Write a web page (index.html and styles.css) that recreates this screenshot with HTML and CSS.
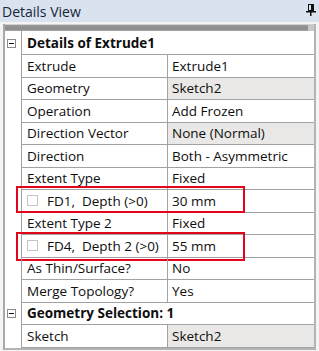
FILE: index.html
```html
<!DOCTYPE html>
<html>
<head>
<meta charset="utf-8">
<link rel="stylesheet" href="styles.css">
</head>
<body>
<div class="panel">
  <div class="titlebar">
    <span class="title">Details View</span>
    <svg class="pin" width="10" height="12" viewBox="0 0 10 12">
      <rect x="2.5" y="0.5" width="5" height="6" fill="none" stroke="#111" stroke-width="1"/>
      <rect x="5" y="1" width="2" height="5" fill="#111"/>
      <rect x="0" y="7" width="10" height="1.5" fill="#111"/>
      <rect x="4" y="8" width="1.5" height="4" fill="#111"/>
    </svg>
  </div>
  <div class="frame">
    <div class="colhdr"><span class="corner"></span></div>
    <div class="grid">
      <div class="row group first">
        <div class="gutter"><span class="toggle"></span></div>
        <div class="gcell">Details of Extrude1</div>
      </div>
      <div class="row"><div class="gutter"></div><div class="name">Extrude</div><div class="value">Extrude1</div></div>
      <div class="row"><div class="gutter"></div><div class="name">Geometry</div><div class="value shade">Sketch2</div></div>
      <div class="row"><div class="gutter"></div><div class="name">Operation</div><div class="value">Add Frozen</div></div>
      <div class="row"><div class="gutter"></div><div class="name">Direction Vector</div><div class="value shade">None (Normal)</div></div>
      <div class="row"><div class="gutter"></div><div class="name">Direction</div><div class="value">Both - Asymmetric</div></div>
      <div class="row"><div class="gutter"></div><div class="name">Extent Type</div><div class="value">Fixed</div></div>
      <div class="row"><div class="gutter"></div><div class="name"><span class="check"></span>FD1,&nbsp; Depth (&gt;0)</div><div class="value">30 mm</div><div class="mark"></div></div>
      <div class="row"><div class="gutter"></div><div class="name">Extent Type 2</div><div class="value">Fixed</div></div>
      <div class="row"><div class="gutter"></div><div class="name"><span class="check"></span>FD4,&nbsp; Depth 2 (&gt;0)</div><div class="value">55 mm</div><div class="mark tall"></div></div>
      <div class="row"><div class="gutter"></div><div class="name">As Thin/Surface?</div><div class="value">No</div></div>
      <div class="row"><div class="gutter"></div><div class="name">Merge Topology?</div><div class="value">Yes</div></div>
      <div class="row group">
        <div class="gutter"><span class="toggle"></span></div>
        <div class="gcell">Geometry Selection: 1</div>
      </div>
      <div class="row"><div class="gutter"></div><div class="name">Sketch</div><div class="value shade">Sketch2</div></div>
    </div>
  </div>
</div>
</body>
</html>
```

FILE: styles.css
```css
html, body {
  margin: 0;
  padding: 0;
  background: #f4f4f4;
}
.panel {
  width: 319px;
  height: 351px;
  font-family: "Open Sans", "Noto Sans", sans-serif;
  color: #0e0e0e;
  background: #f4f4f4;
}
.titlebar {
  height: 22px;
  background: #d8e3ef;
  display: flex;
  align-items: center;
  justify-content: space-between;
  padding: 0 3px 0 2px;
  box-sizing: border-box;
}
.title {
  font-size: 14px;
  color: #17253a;
}
.pin {
  display: block;
  margin-top: -2px;
}
.frame {
  margin: 2px 0 0 3px;
  width: 313px;
  box-sizing: border-box;
  border-left: 2px solid #a9a9a9;
  border-right: 2px solid #b4b4b4;
  border-bottom: 2px solid #b4b4b4;
  background: #fff;
}
.colhdr {
  height: 7px;
  background: linear-gradient(#d0d0d0 0, #d0d0d0 1px, #9a9a9a 1px, #8c8c8c 5px, #a8a8a8 7px);
  position: relative;
}
.corner {
  position: absolute;
  right: 0;
  top: 1px;
  width: 6px;
  height: 6px;
  background: #c8c8c8;
}
.grid {
  display: flex;
  flex-direction: column;
}
.row {
  display: flex;
  height: 22.5px;
  font-size: 13.5px;
  position: relative;
}
.row.group.first {
  height: 24px;
}
.gutter {
  width: 16px;
  border-right: 1px solid #a2a2a2;
  display: flex;
  align-items: center;
  flex: none;
}
.toggle {
  width: 9px;
  height: 9px;
  margin-left: 2px;
  box-sizing: border-box;
  border: 1px solid #8a8a8a;
  position: relative;
  background: #fff;
}
.toggle::after {
  content: "";
  position: absolute;
  left: 1px;
  right: 1px;
  top: 3px;
  height: 1px;
  background: #111;
}
.name, .value, .gcell {
  border-bottom: 1px solid #a2a2a2;
  box-sizing: border-box;
  display: flex;
  align-items: center;
  white-space: nowrap;
  overflow: hidden;
}
.name {
  width: 146px;
  border-right: 1px solid #a2a2a2;
  padding-left: 5px;
  flex: none;
}
.value {
  flex: 1;
  padding-left: 4px;
}
.value.shade {
  background: #e9e8e6;
}
.gcell {
  flex: 1;
  padding-left: 5px;
  font-weight: bold;
}
.check {
  width: 11px;
  height: 11px;
  box-sizing: border-box;
  border: 1px solid #c4c4c4;
  margin-right: 9px;
  flex: none;
}
.mark {
  position: absolute;
  left: 11px;
  top: -4px;
  width: 229px;
  height: 27px;
  border: 2px solid #e1061c;
  box-sizing: border-box;
  pointer-events: none;
}
.mark.tall {
  top: -3px;
  height: 29px;
}
```
